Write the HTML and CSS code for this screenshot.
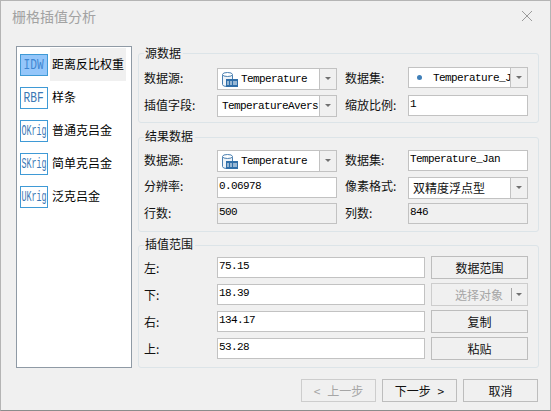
FILE: index.html
```html
<!DOCTYPE html>
<html lang="zh-CN">

<head>
    <meta charset="UTF-8">
    <title>栅格插值分析</title>
    <link rel="stylesheet" href="styles.css">
</head>

<body>
    <div class="dialog">
        <div class="title-bar">
            <span class="title">栅格插值分析</span>
            <svg class="close" width="12" height="12" viewBox="0 0 12 12">
                <path d="M1 1 L11 11 M11 1 L1 11" stroke="#9a9a9a" stroke-width="1" fill="none" />
            </svg>
        </div>

        <div class="content">
            <ul class="methods">
                <li class="method active"><span class="badge"><span class="badge-text">IDW</span></span><span class="method-name">距离反比权重</span></li>
                <li class="method"><span class="badge"><span class="badge-text">RBF</span></span><span class="method-name">样条</span></li>
                <li class="method"><span class="badge"><span class="badge-text narrow">OKrig</span></span><span class="method-name">普通克吕金</span></li>
                <li class="method"><span class="badge"><span class="badge-text narrow">SKrig</span></span><span class="method-name">简单克吕金</span></li>
                <li class="method"><span class="badge"><span class="badge-text narrow">UKrig</span></span><span class="method-name">泛克吕金</span></li>
            </ul>

            <div class="panels">
                <fieldset class="group group-source">
                    <legend>源数据</legend>
                    <div class="form-grid">
                        <label>数据源:</label>
                        <div class="combo">
                            <span class="combo-value">
                                <svg class="db-icon" width="16" height="15" viewBox="0 0 16 15">
                                    <path d="M0.5 3 V12.5 Q0.5 14.5 5 14.5 H10.5 V3 Z" fill="#eef3f8" stroke="#4a7fb0" />
                                    <ellipse cx="5.5" cy="2.5" rx="5" ry="2" fill="#fff" stroke="#4a7fb0" />
                                    <rect x="4" y="7" width="12" height="8" fill="#2f6ea8" />
                                    <path d="M6 9 V13 M9 9 V13 M12 9 V13 M14 9 V13" stroke="#fff" />
                                </svg>
                                <span class="mono">Temperature</span>
                            </span>
                            <span class="combo-arrow"></span>
                        </div>
                        <label class="label-right">数据集:</label>
                        <div class="combo combo-raised">
                            <span class="combo-value">
                                <span class="dot"></span>
                                <span class="mono">Temperature_J</span>
                            </span>
                            <span class="combo-arrow"></span>
                        </div>
                        <label>插值字段:</label>
                        <div class="combo">
                            <span class="combo-value plain"><span class="mono">TemperatureAvers</span></span>
                            <span class="combo-arrow"></span>
                        </div>
                        <label class="label-right">缩放比例:</label>
                        <div class="field mono">1</div>
                    </div>
                </fieldset>

                <fieldset class="group group-result">
                    <legend>结果数据</legend>
                    <div class="form-grid">
                        <label>数据源:</label>
                        <div class="combo">
                            <span class="combo-value">
                                <svg class="db-icon" width="16" height="15" viewBox="0 0 16 15">
                                    <path d="M0.5 3 V12.5 Q0.5 14.5 5 14.5 H10.5 V3 Z" fill="#eef3f8" stroke="#4a7fb0" />
                                    <ellipse cx="5.5" cy="2.5" rx="5" ry="2" fill="#fff" stroke="#4a7fb0" />
                                    <rect x="4" y="7" width="12" height="8" fill="#2f6ea8" />
                                    <path d="M6 9 V13 M9 9 V13 M12 9 V13 M14 9 V13" stroke="#fff" />
                                </svg>
                                <span class="mono">Temperature</span>
                            </span>
                            <span class="combo-arrow"></span>
                        </div>
                        <label class="label-right">数据集:</label>
                        <div class="field mono">Temperature_Jan</div>
                        <label>分辨率:</label>
                        <div class="field mono">0.06978</div>
                        <label class="label-right">像素格式:</label>
                        <div class="combo">
                            <span class="combo-value plain">双精度浮点型</span>
                            <span class="combo-arrow"></span>
                        </div>
                        <label>行数:</label>
                        <div class="field mono readonly">500</div>
                        <label class="label-right">列数:</label>
                        <div class="field mono readonly">846</div>
                    </div>
                </fieldset>

                <fieldset class="group group-bounds">
                    <legend>插值范围</legend>
                    <div class="bounds-grid">
                        <label>左:</label>
                        <div class="field mono">75.15</div>
                        <button class="btn">数据范围</button>
                        <label>下:</label>
                        <div class="field mono">18.39</div>
                        <button class="btn btn-split" disabled>选择对象<span class="split-line"></span><span class="split-arrow"></span></button>
                        <label>右:</label>
                        <div class="field mono">134.17</div>
                        <button class="btn">复制</button>
                        <label>上:</label>
                        <div class="field mono">53.28</div>
                        <button class="btn">粘贴</button>
                    </div>
                </fieldset>
            </div>
        </div>

        <div class="footer">
            <button class="btn btn-footer" disabled>&lt; 上一步</button>
            <button class="btn btn-footer">下一步 &gt;</button>
            <button class="btn btn-footer">取消</button>
        </div>
    </div>
</body>

</html>
```

FILE: styles.css
```css
* {
    box-sizing: border-box;
}

html, body {
    margin: 0;
    padding: 0;
}

body {
    width: 551px;
    height: 411px;
    overflow: hidden;
    font-family: "Noto Sans CJK SC", "Liberation Sans", sans-serif;
    font-size: 12px;
    color: #111;
}

.dialog {
    width: 551px;
    height: 411px;
    background-color: #f0f0f0;
    border: 1px solid #b4b4b4;
    border-bottom-color: #8c8c8c;
    display: flex;
    flex-direction: column;
}

.title-bar {
    flex: none;
    height: 45px;
    padding: 0 17px 16px 11px;
    display: flex;
    align-items: center;
    justify-content: space-between;
}

.title {
    font-size: 14px;
    color: #a2a2a2;
}

.content {
    flex: none;
    display: flex;
    gap: 6px;
    padding-left: 15px;
}

.methods {
    width: 116px;
    height: 322px;
    margin: 0;
    padding: 1px 0 0 3px;
    list-style: none;
    background-color: #fff;
    border: 1px solid #8f9aa5;
}

.method {
    height: 33px;
    display: flex;
    align-items: center;
    gap: 2px;
}

.badge {
    width: 28px;
    height: 22px;
    flex: none;
    display: flex;
    align-items: center;
    justify-content: center;
    border: 1px solid #3f9ad6;
    color: #3b78b5;
    font-family: "Liberation Mono", monospace;
    font-size: 14px;
    overflow: hidden;
}

.badge-text {
    flex: none;
    transform: scaleX(0.8);
}

.badge-text.narrow {
    transform: scaleX(0.6);
}

.active .badge {
    background-color: #94c6fa;
    color: #3f86d2;
}

.method-name {
    height: 33px;
    width: 76px;
    padding-left: 2px;
    line-height: 32px;
    white-space: nowrap;
    color: #000;
}

.active .method-name {
    background-color: #f0f0f0;
}

.panels {
    width: 401px;
    display: flex;
    flex-direction: column;
}

.group {
    margin: 0;
    padding: 0 10px 0 5px;
    border: 1px solid #dce4e8;
    border-radius: 3px;
    min-inline-size: 0;
}

.group legend {
    padding: 0 2px 3px 1px;
    font-size: 12px;
    line-height: 14px;
}

.group-source {
    height: 77px;
}

.group-source legend {
    padding-bottom: 1px;
}

.group-result {
    height: 103px;
    margin-top: 6px;
}

.group-bounds {
    height: 131px;
    margin-top: 5px;
}

.form-grid {
    display: grid;
    grid-template-columns: 73px 120px 71px 120px;
    grid-auto-rows: 22px;
    align-items: start;
}

.group-source .form-grid {
    margin-top: 7px;
    row-gap: 5px;
}

.group-result .form-grid {
    margin-top: 4px;
    row-gap: 4.5px;
}

.bounds-grid {
    display: grid;
    grid-template-columns: 73px 208px 6px 97px;
    grid-auto-rows: 23px;
    row-gap: 4px;
    margin-top: 2px;
    align-items: center;
}

.bounds-grid label {
    grid-column: 1;
    padding-bottom: 0;
}

.bounds-grid .field {
    grid-column: 2;
}

.bounds-grid .btn {
    grid-column: 4;
}

label {
    align-self: center;
    padding-bottom: 4px;
    white-space: nowrap;
}

.label-right {
    padding-left: 8px;
}

.mono {
    font-family: "Liberation Mono", monospace;
    font-size: 11px;
    letter-spacing: -0.6px;
    color: #000;
}

.field {
    height: 21px;
    line-height: 16px;
    padding: 0 1px;
    background-color: #fff;
    border: 1px solid #c2c2c2;
    white-space: nowrap;
}

.field.readonly {
    background-color: #f0f0f0;
}

.combo {
    height: 22px;
    display: flex;
    background-color: #fff;
    border: 1px solid #c2c2c2;
}

.combo-raised {
    height: 21px;
    margin-top: -1px;
}

.combo-value {
    flex: 1;
    min-width: 0;
    display: flex;
    align-items: center;
    gap: 3px;
    padding-left: 4px;
    overflow: hidden;
    white-space: nowrap;
}

.combo-arrow {
    width: 17px;
    flex: none;
    position: relative;
    background-color: #f0f0f0;
    border-left: 1px solid #c2c2c2;
}

.combo-arrow::after {
    content: "";
    position: absolute;
    left: 5px;
    top: 8px;
    border-left: 3px solid transparent;
    border-right: 3px solid transparent;
    border-top: 3px solid #707070;
}

.db-icon {
    flex: none;
}

.dot {
    width: 5px;
    height: 5px;
    margin: 0 8px 0 4px;
    flex: none;
    border-radius: 50%;
    background-color: #3f7fb8;
}

.btn {
    height: 23px;
    padding: 0;
    font-family: inherit;
    font-size: 12px;
    color: #111;
    background-color: #f0f0f0;
    border: 1px solid #bdbdbd;
}

.btn:disabled {
    color: #a6a6a6;
    border-color: #cdcdcd;
}

.btn-split {
    display: flex;
    align-items: center;
    padding-left: 23px;
}

.split-line {
    width: 1px;
    height: 13px;
    margin: 0 4px 0 8px;
    background-color: #a6a6a6;
}

.split-arrow {
    border-left: 3px solid transparent;
    border-right: 3px solid transparent;
    border-top: 3px solid #707070;
}

.footer {
    flex: none;
    margin-top: 11px;
    padding-right: 12px;
    display: flex;
    justify-content: flex-end;
    gap: 6px;
}

.btn-footer {
    width: 75px;
    height: 23px;
    word-spacing: 4px;
}
```
